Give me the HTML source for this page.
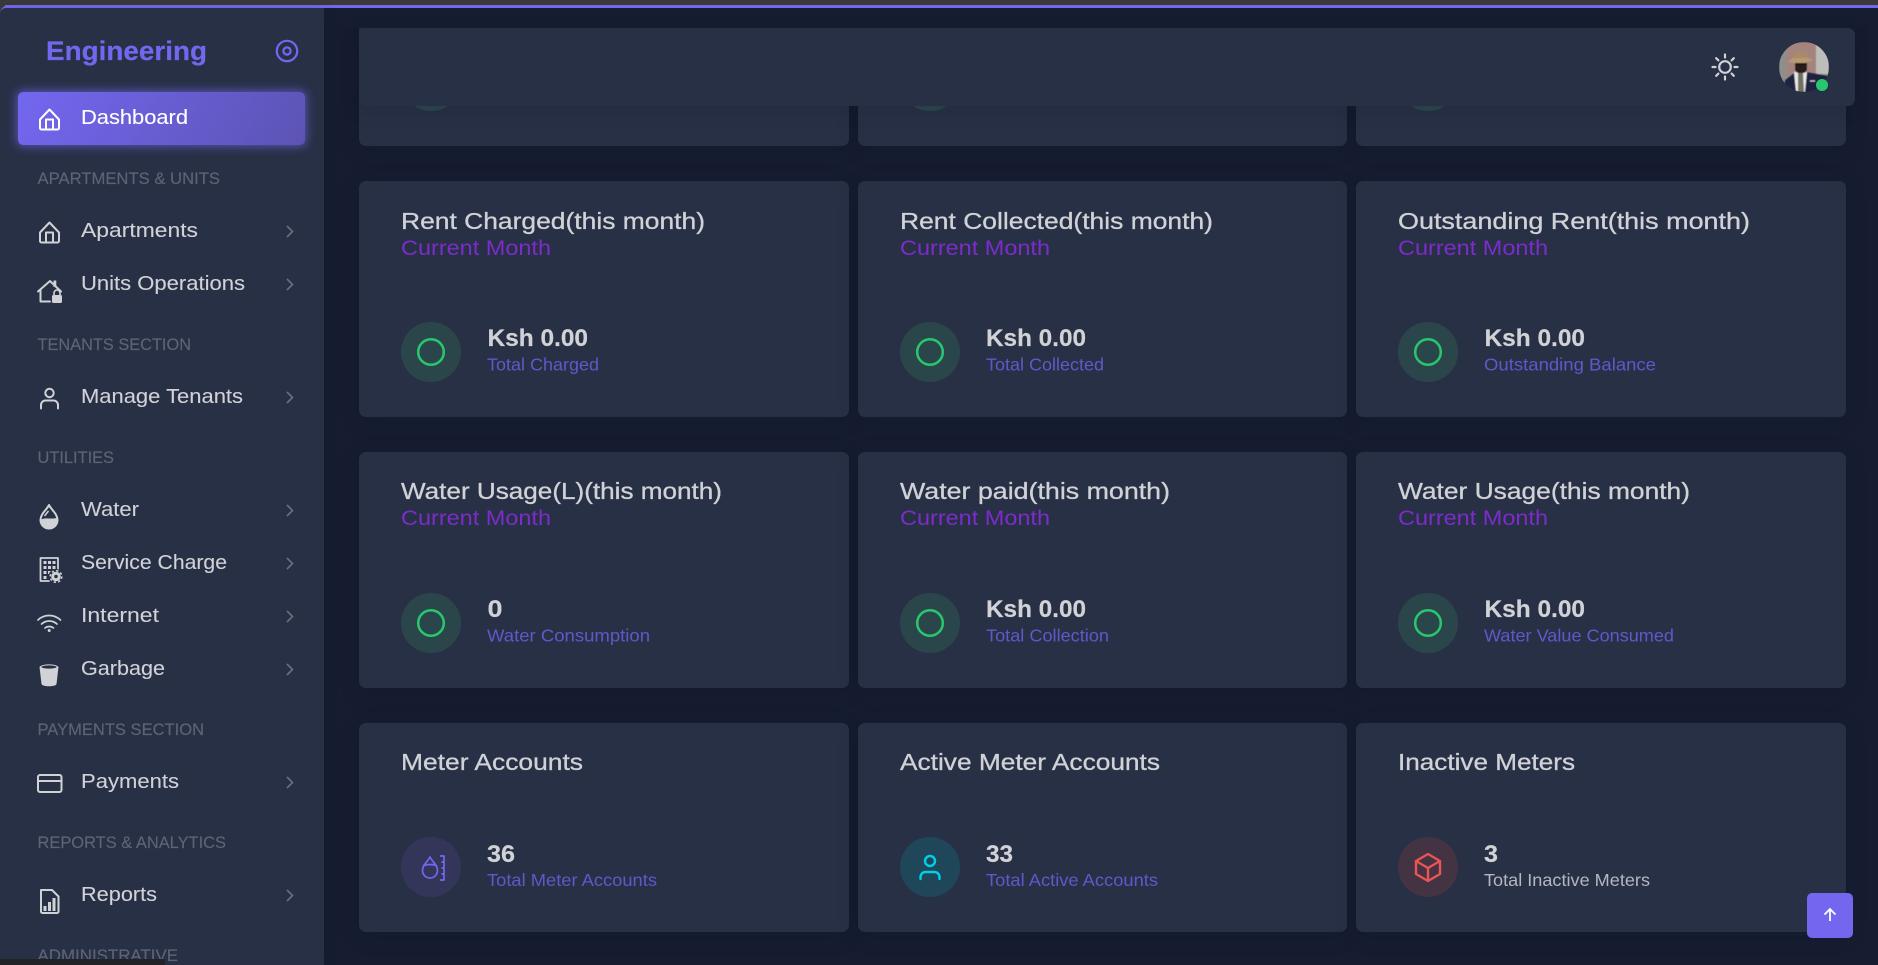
<!DOCTYPE html>
<html lang="en"><head><meta charset="utf-8"><title>Engineering Dashboard</title>
<style>
html,body{margin:0;padding:0;width:1878px;height:965px;overflow:hidden;background:#3a3a3a}
#app{position:absolute;left:0;top:5px;width:1878px;height:960px;border-top:3px solid #7367f0;border-top-left-radius:9px;background:#161d31;overflow:hidden;box-sizing:border-box}
.side{position:absolute;left:0;top:8px;width:324px;height:957px;background:#283046;box-shadow:0 0 15px rgba(0,0,0,.1);border-top-left-radius:6px}
.btn{position:absolute;left:18px;top:92px;width:287px;height:53px;border-radius:5px;background:linear-gradient(118deg,#7367f0,#5c54b4);box-shadow:0 0 10px 1px rgba(115,103,240,.7)}
.card{position:absolute;background:#283046;border-radius:7px;box-shadow:0 4px 24px rgba(15,20,35,.12);overflow:hidden}
.peek{position:absolute;width:60px;height:60px;border-radius:50%;background:#2b464a;left:42px;top:141px}
.mask{position:absolute;left:324px;top:8px;width:1554px;height:20px;background:#161d31}
.nav{position:absolute;left:359px;top:28px;width:1496px;height:78px;background:#283046;border-radius:7px;box-shadow:0 4px 20px rgba(15,20,35,.12)}
.top{position:absolute;left:1807px;top:893px;width:46px;height:45px;background:#7367f0;border-radius:5px}
svg{position:absolute;left:0;top:0}
text{font-family:"Liberation Sans",sans-serif}
.nv{font-size:20px;fill:#d0d2d6;stroke:#d0d2d6;stroke-width:.1}
.sc{font-size:17px;fill:#5e6475;stroke:#5e6475;stroke-width:.15}
.t{font-size:23px;fill:#d0d2d6;stroke:#d0d2d6;stroke-width:.3}
.m{font-size:21.5px;fill:#7b2cc9}
.v{font-size:24px;font-weight:bold;fill:#d0d2d6;stroke:#d0d2d6;stroke-width:.2}
.s{font-size:17.5px;fill:#5f58c9}
.ch{fill:none;stroke:#6b7080;stroke-width:1.6}
.ic{fill:none;stroke:#d0d2d6;stroke-width:2;stroke-linejoin:round;stroke-linecap:round}
.g{fill:#2b464a}
.r{fill:none;stroke:#28c76f;stroke-width:2.5}
</style></head><body>
<div id="app"></div>
<div class="card" style="left:359px;top:-90px;width:490px;height:236px"><div class="peek"></div></div>
<div class="card" style="left:858px;top:-90px;width:489px;height:236px"><div class="peek"></div></div>
<div class="card" style="left:1356px;top:-90px;width:490px;height:236px"><div class="peek"></div></div>
<div class="card" style="left:359px;top:181px;width:490px;height:236px"></div>
<div class="card" style="left:858px;top:181px;width:489px;height:236px"></div>
<div class="card" style="left:1356px;top:181px;width:490px;height:236px"></div>
<div class="card" style="left:359px;top:452px;width:490px;height:236px"></div>
<div class="card" style="left:858px;top:452px;width:489px;height:236px"></div>
<div class="card" style="left:1356px;top:452px;width:490px;height:236px"></div>
<div class="card" style="left:359px;top:723px;width:490px;height:209px"></div>
<div class="card" style="left:858px;top:723px;width:489px;height:209px"></div>
<div class="card" style="left:1356px;top:723px;width:490px;height:209px"></div>
<div class="mask"></div>
<div style="position:absolute;left:0;top:0;width:1878px;height:5px;background:#3a3a3a"></div>
<div style="position:absolute;left:5px;top:5px;width:1873px;height:3px;background:#7367f0"></div>
<div class="nav"></div>
<div class="side"></div>
<div class="btn"></div>
<div class="top"></div>
<svg width="1878" height="965" viewBox="0 0 1878 965" xmlns="http://www.w3.org/2000/svg">
<defs>
<clipPath id="av"><circle cx="1804" cy="67" r="25"/></clipPath>
<filter id="bl" x="-10%" y="-10%" width="120%" height="120%"><feGaussianBlur stdDeviation=".5"/></filter>
<g id="home"><path d="M40 119.500 49.500 109.500 59 119.500V128a1.500 1.500 0 0 1-1.500 1.500h-16A1.500 1.500 0 0 1 40 128Z"/><path d="M46 129.500V119.500h7V129.500"/></g>
</defs>

<!-- logo -->
<text x="46" y="60" font-size="27" font-weight="bold" fill="#7367f0" stroke="#7367f0" stroke-width=".2" textLength="161" lengthAdjust="spacingAndGlyphs">Engineering</text>
<circle cx="287" cy="51" r="10.2" fill="none" stroke="#7367f0" stroke-width="2.2"/><circle cx="287" cy="51" r="3.6" fill="none" stroke="#7367f0" stroke-width="2.2"/>

<!-- nav -->
<use href="#home" class="ic" style="stroke:#fff"/>
<text x="81" y="124" class="nv" style="fill:#fff;stroke:#fff" textLength="107" lengthAdjust="spacingAndGlyphs">Dashboard</text>
<text x="37.500" y="184" class="sc" textLength="182.500" lengthAdjust="spacingAndGlyphs">APARTMENTS &amp; UNITS</text>

<use href="#home" class="ic" y="113"/>
<text x="81" y="237" class="nv" textLength="117" lengthAdjust="spacingAndGlyphs">Apartments</text>
<path class="ch" d="M287 226l5.500 5.500-5.500 5.500"/>

<path class="ic" d="M38 291.500 50 281 61 291.500M40.500 290V301.500H50"/><path d="M53.500 280.500h2.800v6.500h-2.800z" fill="#d0d2d6"/>
<rect x="52" y="295" width="10" height="8" rx="1.500" fill="#d0d2d6"/><path d="M54 295v-2a3 3 0 0 1 6 0v2" fill="none" stroke="#d0d2d6" stroke-width="1.600"/>
<text x="81" y="290" class="nv" textLength="164" lengthAdjust="spacingAndGlyphs">Units Operations</text>
<path class="ch" d="M287 279l5.500 5.500-5.500 5.500"/>

<text x="37.500" y="350" class="sc" textLength="153.500" lengthAdjust="spacingAndGlyphs">TENANTS SECTION</text>
<circle cx="49.500" cy="393" r="4.200" class="ic"/><path class="ic" d="M41 408.500V405a4.500 4.500 0 0 1 4.500-4.500h8A4.500 4.500 0 0 1 58 405v3.500"/>
<text x="81" y="403" class="nv" textLength="162" lengthAdjust="spacingAndGlyphs">Manage Tenants</text>
<path class="ch" d="M287 392l5.500 5.500-5.500 5.500"/>

<text x="37.500" y="463" class="sc" textLength="76.500" lengthAdjust="spacingAndGlyphs">UTILITIES</text>
<path class="ic" d="M49 505C46.500 510 40.500 514 40.500 520A8.500 8.500 0 0 0 57.500 520C57.500 514 51.500 510 49 505Z"/><path fill="#d0d2d6" d="M40 520C45 516.500 52 520 58 517.500 59 524 55 529 49 529S40 525 40 520Z"/>
<path d="M44.500 516 48.500 511" stroke="#d0d2d6" stroke-width="1.500"/>
<text x="81" y="516" class="nv" textLength="58" lengthAdjust="spacingAndGlyphs">Water</text>
<path class="ch" d="M287 505l5.500 5.500-5.500 5.500"/>

<path class="ic" style="stroke-width:1.800" d="M40.500 581V558H58V570M40.500 581H49"/>
<path d="M43.500 561h3v3h-3zM48 561h3v3h-3zM52.500 561h3v3h-3zM43.500 566h3v3h-3zM48 566h3v3h-3zM52.500 566h3v3h-3zM43.500 571h3v3h-3zM48 571h3v3h-3zM43.500 576h3v3h-3z" fill="#d0d2d6"/>
<circle cx="56" cy="576.500" r="7.500" fill="#283046"/>
<circle cx="56" cy="576.500" r="4.800" fill="#d0d2d6"/><circle cx="56" cy="576.500" r="5.800" fill="none" stroke="#d0d2d6" stroke-width="1.600" stroke-dasharray="2.300 2.250"/><circle cx="56" cy="576.500" r="1.800" fill="#283046"/>
<text x="81" y="569" class="nv" textLength="146" lengthAdjust="spacingAndGlyphs">Service Charge</text>
<path class="ch" d="M287 558l5.500 5.500-5.500 5.500"/>

<path class="ic" style="stroke-width:1.700" d="M38 620C44 614 54 614 60.500 620M41.500 624C46 620 52.500 620 57 624M45 628C47.500 626 51 626 53.500 628"/><circle cx="49.200" cy="630.500" r="1.500" fill="#d0d2d6"/>
<text x="81" y="622" class="nv" textLength="78" lengthAdjust="spacingAndGlyphs">Internet</text>
<path class="ch" d="M287 611l5.500 5.500-5.500 5.500"/>

<path d="M39.500 667C42 663.500 56 663.500 58.500 667L56.500 684C56 687 42 687 41.500 684Z" fill="#d0d2d6"/><ellipse cx="49" cy="667" rx="7.500" ry="1.600" fill="#283046"/>
<text x="81" y="675" class="nv" textLength="84" lengthAdjust="spacingAndGlyphs">Garbage</text>
<path class="ch" d="M287 664l5.500 5.500-5.500 5.500"/>

<text x="37.500" y="735" class="sc" textLength="166.500" lengthAdjust="spacingAndGlyphs">PAYMENTS SECTION</text>
<rect x="38" y="775" width="23.500" height="17" rx="2" class="ic"/><path class="ic" d="M38 781H61.500"/>
<text x="81" y="788" class="nv" textLength="98" lengthAdjust="spacingAndGlyphs">Payments</text>
<path class="ch" d="M287 777l5.500 5.500-5.500 5.500"/>

<text x="37.500" y="848" class="sc" textLength="188.500" lengthAdjust="spacingAndGlyphs">REPORTS &amp; ANALYTICS</text>
<path class="ic" d="M41 890H52L58.500 896.500V911.500A1.500 1.500 0 0 1 57 913H42.500A1.500 1.500 0 0 1 41 911.500Z"/><path d="M43.500 906h3v5h-3zM48 902h3v9h-3zM52.500 898h3v13h-3z" fill="#d0d2d6"/>
<text x="81" y="901" class="nv" textLength="76" lengthAdjust="spacingAndGlyphs">Reports</text>
<path class="ch" d="M287 890l5.500 5.500-5.500 5.500"/>

<text x="37.500" y="961" class="sc" textLength="140.500" lengthAdjust="spacingAndGlyphs">ADMINISTRATIVE</text>
<rect x="0" y="959" width="165" height="6" fill="#222327"/>

<!-- topbar -->
<circle cx="1725" cy="67" r="5.800" fill="none" stroke="#d0d2d6" stroke-width="2.200"/>
<path d="M1725 54.500v3M1725 76.500v3M1712.500 67h3M1734.500 67h3M1716.200 58.200l2.200 2.200M1731.600 73.600l2.200 2.200M1716.200 75.800l2.200-2.200M1731.600 60.400l2.200-2.200" stroke="#d0d2d6" stroke-width="2.200" stroke-linecap="round"/>
<g clip-path="url(#av)"><g filter="url(#bl)">
<rect x="1779" y="42" width="50" height="50" fill="#8f8e8b"/>
<rect x="1787" y="42" width="29" height="34" fill="#a5847e"/>
<rect x="1816" y="42" width="13" height="32" fill="#bdbdba"/>
<path d="M1783 92 1785 80 1794 73 1807 72 1829 76V92Z" fill="#1a2340"/>
<path d="M1794 72H1807L1805 92H1796Z" fill="#e8e8e8"/>
<path d="M1798 73h5l1 19h-6Z" fill="#6f7062"/>
<rect x="1795" y="60" width="12" height="13" rx="4" fill="#2a1e1a"/>
<rect x="1795" y="62" width="12" height="2.600" fill="#0a0a0a"/>
<path d="M1793 58 1795 53H1806L1808 58Z" fill="#a98b65"/>
<path d="M1788 62 1793 58H1808L1813 60 1806 63H1795Z" fill="#b89a72"/>
<path d="M1810 81h5" stroke="#cfd0d6" stroke-width="1.200"/>
</g></g>
<circle cx="1822" cy="85" r="6" fill="#28c76f"/>

<!-- row 2 -->
<text x="401" y="229" class="t" textLength="304" lengthAdjust="spacingAndGlyphs">Rent Charged(this month)</text>
<text x="401" y="255" class="m" textLength="150" lengthAdjust="spacingAndGlyphs">Current Month</text>
<circle cx="431" cy="352" r="30" class="g"/><circle cx="431" cy="352" r="12.800" class="r"/>
<text x="487.500" y="346" class="v" textLength="100.500" lengthAdjust="spacingAndGlyphs">Ksh 0.00</text>
<text x="487" y="370.500" class="s" textLength="112" lengthAdjust="spacingAndGlyphs">Total Charged</text>

<text x="900" y="229" class="t" textLength="313" lengthAdjust="spacingAndGlyphs">Rent Collected(this month)</text>
<text x="900" y="255" class="m" textLength="150" lengthAdjust="spacingAndGlyphs">Current Month</text>
<circle cx="930" cy="352" r="30" class="g"/><circle cx="930" cy="352" r="12.800" class="r"/>
<text x="986" y="346" class="v" textLength="100" lengthAdjust="spacingAndGlyphs">Ksh 0.00</text>
<text x="986" y="370.500" class="s" textLength="118" lengthAdjust="spacingAndGlyphs">Total Collected</text>

<text x="1398" y="229" class="t" textLength="352" lengthAdjust="spacingAndGlyphs">Outstanding Rent(this month)</text>
<text x="1398" y="255" class="m" textLength="150" lengthAdjust="spacingAndGlyphs">Current Month</text>
<circle cx="1428" cy="352" r="30" class="g"/><circle cx="1428" cy="352" r="12.800" class="r"/>
<text x="1484.500" y="346" class="v" textLength="100.500" lengthAdjust="spacingAndGlyphs">Ksh 0.00</text>
<text x="1484" y="370.500" class="s" textLength="172" lengthAdjust="spacingAndGlyphs">Outstanding Balance</text>

<!-- row 3 -->
<text x="401" y="499" class="t" textLength="321" lengthAdjust="spacingAndGlyphs">Water Usage(L)(this month)</text>
<text x="401" y="525" class="m" textLength="150" lengthAdjust="spacingAndGlyphs">Current Month</text>
<circle cx="431" cy="623" r="30" class="g"/><circle cx="431" cy="623" r="12.800" class="r"/>
<text x="487.500" y="617" class="v" textLength="15" lengthAdjust="spacingAndGlyphs">0</text>
<text x="487" y="641.500" class="s" textLength="163" lengthAdjust="spacingAndGlyphs">Water Consumption</text>

<text x="900" y="499" class="t" textLength="270" lengthAdjust="spacingAndGlyphs">Water paid(this month)</text>
<text x="900" y="525" class="m" textLength="150" lengthAdjust="spacingAndGlyphs">Current Month</text>
<circle cx="930" cy="623" r="30" class="g"/><circle cx="930" cy="623" r="12.800" class="r"/>
<text x="986" y="617" class="v" textLength="100" lengthAdjust="spacingAndGlyphs">Ksh 0.00</text>
<text x="986" y="641.500" class="s" textLength="123" lengthAdjust="spacingAndGlyphs">Total Collection</text>

<text x="1398" y="499" class="t" textLength="292" lengthAdjust="spacingAndGlyphs">Water Usage(this month)</text>
<text x="1398" y="525" class="m" textLength="150" lengthAdjust="spacingAndGlyphs">Current Month</text>
<circle cx="1428" cy="623" r="30" class="g"/><circle cx="1428" cy="623" r="12.800" class="r"/>
<text x="1484.500" y="617" class="v" textLength="100.500" lengthAdjust="spacingAndGlyphs">Ksh 0.00</text>
<text x="1484" y="641.500" class="s" textLength="190" lengthAdjust="spacingAndGlyphs">Water Value Consumed</text>

<!-- row 4 -->
<text x="401" y="770" class="t" textLength="182" lengthAdjust="spacingAndGlyphs">Meter Accounts</text>
<circle cx="431" cy="867" r="30" fill="#343659"/>
<g fill="none" stroke="#7367f0" stroke-width="1.700" stroke-linejoin="round"><path d="M430 857C427.500 862 422.500 865 422.500 870.500A7.500 7.500 0 0 0 437.500 870.500C437.500 865 432.500 862 430 857Z"/><path d="M423 866C427 864 433 864 437 866"/><path d="M440 856H444V880H440M441.500 862H444M441.500 868H444M441.500 874H444"/></g>
<text x="487" y="862" class="v" textLength="28" lengthAdjust="spacingAndGlyphs">36</text>
<text x="487" y="886" class="s" textLength="170" lengthAdjust="spacingAndGlyphs">Total Meter Accounts</text>

<text x="900" y="770" class="t" textLength="260" lengthAdjust="spacingAndGlyphs">Active Meter Accounts</text>
<circle cx="930" cy="867" r="30" fill="#1f4759"/>
<g fill="none" stroke="#00cfe8" stroke-width="2.400" stroke-linecap="round"><circle cx="930" cy="861" r="5"/><path d="M920.500 879V877a5 5 0 0 1 5-5h9a5 5 0 0 1 5 5v2"/></g>
<text x="986" y="862" class="v" textLength="27" lengthAdjust="spacingAndGlyphs">33</text>
<text x="986" y="886" class="s" textLength="172" lengthAdjust="spacingAndGlyphs">Total Active Accounts</text>

<text x="1398" y="770" class="t" textLength="177" lengthAdjust="spacingAndGlyphs">Inactive Meters</text>
<circle cx="1428" cy="867" r="30" fill="#443343"/>
<g fill="none" stroke="#ea5455" stroke-width="2.400" stroke-linejoin="round"><path d="M1428 854 1440 861V874L1428 881 1416 874V861Z"/><path d="M1416 861 1428 868 1440 861M1428 868V881"/></g>
<text x="1484" y="862" class="v" textLength="14" lengthAdjust="spacingAndGlyphs">3</text>
<text x="1484" y="886" class="s" style="fill:#b4b7bd" textLength="166" lengthAdjust="spacingAndGlyphs">Total Inactive Meters</text>

<!-- scroll top -->
<path d="M1830 921V909M1824.500 914.500 1830 909 1835.500 914.500" fill="none" stroke="#fff" stroke-width="1.800"/>
</svg>
</body></html>
